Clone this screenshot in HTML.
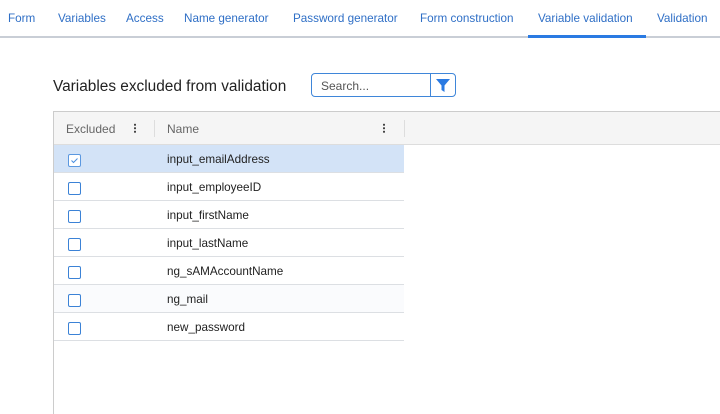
<!DOCTYPE html>
<html><head><meta charset="utf-8"><style>
*{box-sizing:border-box;margin:0;padding:0}
body{width:720px;height:414px;overflow:hidden;background:#fff;font-family:"Liberation Sans",sans-serif;position:relative}
.tabs{position:absolute;left:0;top:0;width:720px;height:38px;border-bottom:2px solid #c9ced6}
.tab{position:absolute;top:12px;font-size:11.7px;color:#2f6fc6;white-space:nowrap}
.ul{position:absolute;left:528px;top:35px;width:118px;height:3px;background:#2a7ae2}
h1{position:absolute;left:53px;top:78px;font-size:15.4px;font-weight:normal;color:#222}
.search{position:absolute;left:311px;top:73px;width:145px;height:24px;border:1px solid #3f86d9;border-radius:4px}
.search span{position:absolute;left:9px;top:5px;font-size:12px;color:#555}
.search .d{position:absolute;left:118px;top:0;width:1px;height:22px;background:#3f86d9}
.grid{position:absolute;left:53px;top:111px;width:667px;height:303px;border-left:1px solid #ccc;border-top:1px solid #ccc}
.hdr{position:absolute;left:0;top:0;width:667px;height:33px;background:#f5f5f5;border-bottom:1px solid #ddd}
.hdr .t{position:absolute;top:10px;font-size:12px;color:#666}
.dots{position:absolute;top:11px;width:2px;height:10px;background:radial-gradient(circle,#444 1px,transparent 1.1px) 0 0/2px 3.5px repeat-y}
.sep{position:absolute;top:8px;width:1px;height:17px;background:#ddd}
.row{position:absolute;left:0;width:350px;height:28px;border-bottom:1px solid #dcdfe3}
.row .n{position:absolute;left:113px;top:8px;font-size:11.7px;color:#222}
.cb{position:absolute;left:14px;top:9px;width:13px;height:13px;border:1px solid #3b82d6;border-radius:2px;background:#fff}
</style></head><body>
<div class="tabs">
<span class="tab" style="left:8px">Form</span>
<span class="tab" style="left:58px">Variables</span>
<span class="tab" style="left:126px">Access</span>
<span class="tab" style="left:184px">Name generator</span>
<span class="tab" style="left:293px">Password generator</span>
<span class="tab" style="left:420px">Form construction</span>
<span class="tab" style="left:538px">Variable validation</span>
<span class="tab" style="left:657px">Validation</span>
<div class="ul"></div>
</div>
<h1>Variables excluded from validation</h1>
<div class="search"><span>Search...</span><div class="d"></div>
<svg style="position:absolute;left:124px;top:5px" width="14" height="13" viewBox="0 0 14 13"><path d="M0 0H14L8.5 6.5V13L5.5 11V6.5Z" fill="#2a7ae2"/></svg></div>
<div class="grid">
<div class="hdr">
<span class="t" style="left:12px">Excluded</span><span class="dots" style="left:80px"></span>
<div class="sep" style="left:100px"></div>
<span class="t" style="left:113px">Name</span><span class="dots" style="left:329px"></span>
<div class="sep" style="left:350px"></div>
</div>
<div class="row" style="top:33px;background:#d3e3f7"><div class="cb" style="border-color:#5b98e0"><svg width="11" height="11" viewBox="0 0 11 11" style="position:absolute;left:0;top:0"><path d="M2.5 5.5L4.5 7.5L8.5 3.5" stroke="#4a8fe0" stroke-width="1" fill="none"/></svg></div><span class="n">input_emailAddress</span></div>
<div class="row" style="top:61px"><div class="cb"></div><span class="n">input_employeeID</span></div>
<div class="row" style="top:89px"><div class="cb"></div><span class="n">input_firstName</span></div>
<div class="row" style="top:117px"><div class="cb"></div><span class="n">input_lastName</span></div>
<div class="row" style="top:145px"><div class="cb"></div><span class="n">ng_sAMAccountName</span></div>
<div class="row" style="top:173px;background:#fafbfd"><div class="cb"></div><span class="n">ng_mail</span></div>
<div class="row" style="top:201px"><div class="cb"></div><span class="n">new_password</span></div>
</div>
</body></html>
